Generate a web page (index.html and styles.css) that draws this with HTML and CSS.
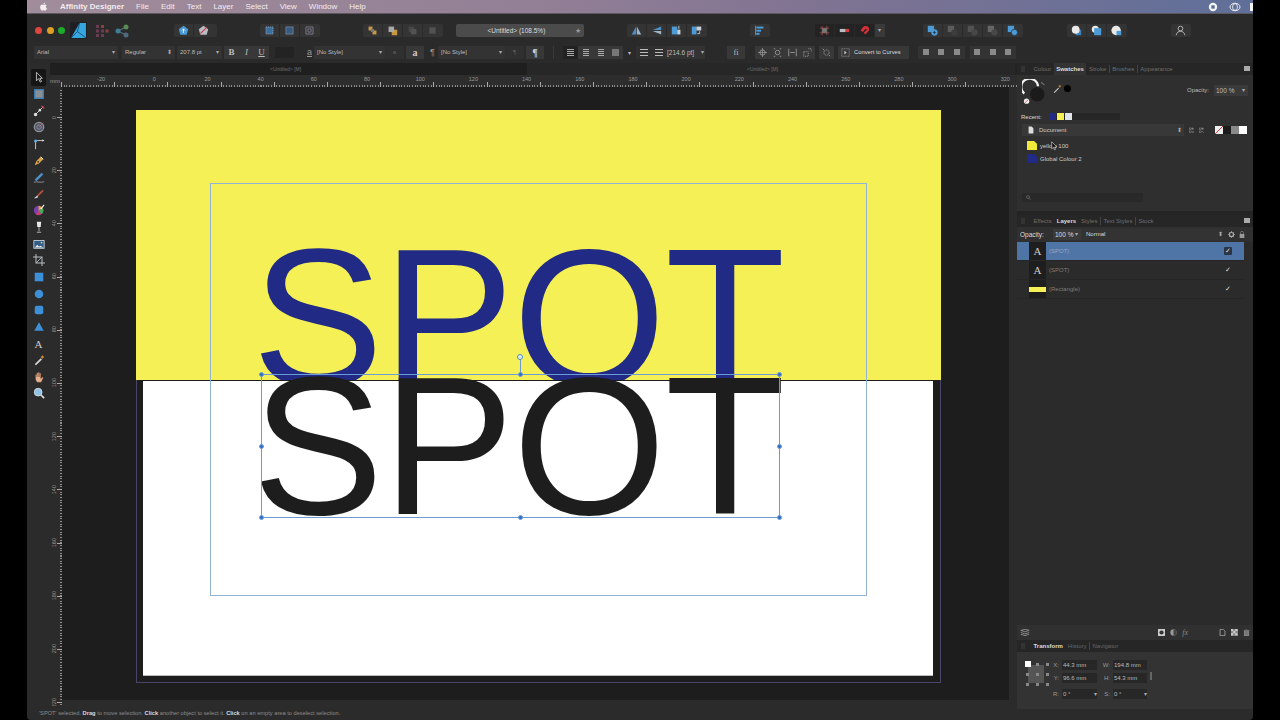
FILE: index.html
```html
<!DOCTYPE html>
<html lang="en">
<head>
    <meta charset="UTF-8">
    <title>Affinity Designer</title>
    <link rel="stylesheet" href="styles.css">
</head>
<body>
<div class="app">
    <!-- mac menu bar -->
    <div class="menubar">
        <svg class="apple" viewBox="0 0 16 16"><path d="M11 1c0 2-1.500 3.200-3 3.200C8 2.500 9.500 1.200 11 1zM8 5c1 0 1.800-.7 3-.7 1 0 2 .5 2.700 1.400-2.400 1.500-2 4.700.5 5.700-.7 1.800-2 3.900-3.400 3.900-1 0-1.500-.6-2.700-.6s-1.700.6-2.700.6C3.800 15.300 2 12 2 9.200 2 6.200 3.800 4.300 5.500 4.300 6.500 4.300 7.200 5 8 5z" fill="#f2eef0"/></svg>
        <span class="menu-app">Affinity Designer</span>
        <span class="menu-item">File</span>
        <span class="menu-item">Edit</span>
        <span class="menu-item">Text</span>
        <span class="menu-item">Layer</span>
        <span class="menu-item">Select</span>
        <span class="menu-item">View</span>
        <span class="menu-item">Window</span>
        <span class="menu-item">Help</span>
        <span class="menu-right">
            <svg class="tray" viewBox="0 0 12 12"><circle cx="6" cy="6" r="5" fill="#f4f4f4"/><rect x="4" y="4" width="4" height="4" fill="#5c6c96"/></svg>
            <svg class="tray tray-cc" viewBox="0 0 14 12"><ellipse cx="7" cy="6" rx="6" ry="4.500" fill="none" stroke="#eee" stroke-width="1.200"/><ellipse cx="7" cy="6" rx="3" ry="4" fill="none" stroke="#eee"/></svg>
            <span class="tray-cut"></span>
        </span>
    </div>

    <!-- main toolbar -->
    <div class="toolbar">
        <span class="light light-red"></span>
        <span class="light light-amber"></span>
        <span class="light light-green"></span>
        <svg class="logo" viewBox="0 0 16 16"><rect width="16" height="16" fill="#1d1f22"/><path d="M1 15 9 1h6v14z" fill="#35a6e0"/><path d="M1 15 7 9l8 6M7 9l2-8" fill="none" stroke="#0f3f66" stroke-width=".7"/></svg>
        <svg class="persona" viewBox="0 0 14 14"><g fill="#6b3b52"><rect x="1" y="1" width="3" height="3"/><rect x="6" y="1" width="3" height="3" fill="#8c3f3f"/><rect x="1" y="5.500" width="3" height="3"/><rect x="6" y="5.500" width="3" height="3"/><rect x="10.500" y="5.500" width="3" height="3" fill="#8c3f3f"/><rect x="1" y="10" width="3" height="3"/><rect x="6" y="10" width="3" height="3"/></g></svg>
        <svg class="persona persona-b" viewBox="0 0 14 14"><path d="M3 7 11 3M3 7l8 4" stroke="#55707a" stroke-width="1.200"/><circle cx="3" cy="7" r="2.500" fill="#3f7f95"/><circle cx="11" cy="3" r="2.500" fill="#5a8a55"/><circle cx="11" cy="11" r="2.500" fill="#4d6a80"/></svg>

        <div class="tb-group tb-share">
            <span class="tb-btn"><svg viewBox="0 0 14 14"><path d="M7 1l6 4.500-2 7H3l-2-7z" fill="#4d9bd6"/><path d="M7 10V5M5 7l2-2 2 2" stroke="#fff" fill="none"/></svg></span>
            <span class="tb-btn"><svg viewBox="0 0 14 14"><path d="M7 1l6 4.500-2 7H3l-2-7z" fill="#b9bec6"/><path d="M3 11 11 3" stroke="#d23b3b" stroke-width="1.400"/></svg></span>
        </div>
        <div class="tb-group tb-snap">
            <span class="tb-btn"><svg viewBox="0 0 14 14"><rect x="2.500" y="2.500" width="9" height="9" fill="#3a6f9c" stroke="#9ab" stroke-dasharray="1.500 1"/></svg></span>
            <span class="tb-btn"><svg viewBox="0 0 14 14"><rect x="2.500" y="2.500" width="9" height="9" fill="#365a80" stroke="#789"/></svg></span>
            <span class="tb-btn"><svg viewBox="0 0 14 14"><path d="M2.500 2.500h9v9h-9z M5 5h4v4H5z" fill="none" stroke="#889"/></svg></span>
        </div>
        <div class="tb-group tb-order">
            <span class="tb-btn"><svg viewBox="0 0 14 14"><rect x="2" y="2" width="5" height="5" fill="#c79a4a"/><rect x="7" y="7" width="5" height="5" fill="#c79a4a"/><rect x="5" y="5" width="4" height="4" fill="#777"/></svg></span>
            <span class="tb-btn"><svg viewBox="0 0 14 14"><rect x="6" y="6" width="7" height="7" fill="#c8983f"/><rect x="2" y="2" width="7" height="7" fill="#aaa"/></svg></span>
            <span class="tb-btn tb-dim"><svg viewBox="0 0 14 14"><rect x="2" y="2" width="7" height="7" fill="#555"/><rect x="5" y="5" width="7" height="7" fill="#666"/></svg></span>
            <span class="tb-btn tb-dim"><svg viewBox="0 0 14 14"><rect x="3" y="3" width="8" height="8" fill="#666"/></svg></span>
        </div>
        <div class="doc-title">&lt;Untitled&gt; (108.5%)<span class="doc-star">★</span></div>
        <div class="tb-group tb-flip">
            <span class="tb-btn"><svg viewBox="0 0 14 14"><path d="M6.500 2v10H1z" fill="#4d8fc7"/><path d="M7.500 2v10H13z" fill="#9fb4c7"/></svg></span>
            <span class="tb-btn"><svg viewBox="0 0 14 14"><path d="M13 2v4.500H2z" fill="#4d8fc7"/><path d="M13 12V7.500H2z" fill="#9fb4c7"/></svg></span>
            <span class="tb-btn"><svg viewBox="0 0 14 14"><rect x="1" y="2" width="7" height="10" fill="#4d9bd6"/><rect x="8" y="6" width="4" height="6" fill="#c6d0d8"/><path d="M10 1v4" stroke="#ddd"/></svg></span>
            <span class="tb-btn"><svg viewBox="0 0 14 14"><rect x="1" y="2" width="6" height="10" fill="#4d9bd6"/><rect x="7" y="2" width="6" height="5" fill="#c6d0d8"/><path d="M11 8v3H8" stroke="#ddd" fill="none"/></svg></span>
        </div>
        <div class="tb-group tb-align">
            <span class="tb-btn"><svg viewBox="0 0 14 14"><path d="M2 1v12" stroke="#7aa"/><rect x="3" y="2" width="9" height="2.500" fill="#4d9bd6"/><rect x="3" y="6" width="6" height="2.500" fill="#4d9bd6"/><rect x="3" y="10" width="4" height="2.500" fill="#4d9bd6"/></svg></span>
        </div>
        <div class="tb-group tb-guides">
            <span class="tb-btn"><svg viewBox="0 0 14 14"><path d="M4 1v12M10 1v12M1 4h12M1 10h12" stroke="#b05050"/><rect x="4" y="4" width="6" height="6" fill="#777"/></svg></span>
            <span class="tb-btn"><svg viewBox="0 0 14 14"><rect x="1" y="5" width="8" height="4" fill="#b9bec6"/><rect x="8" y="5" width="5" height="4" fill="#d23b3b"/></svg></span>
            <span class="tb-btn"><svg viewBox="0 0 14 14"><path d="M12 3a4.500 4.500 0 0 0-7 0L2 7l3 2 3-4a1.500 1.500 0 0 1 2 1l-4 4 2 2 4-4c1.200-1.500 1-3.500 0-5z" fill="#d8303a"/></svg></span>
            <span class="tb-arrow">▾</span>
        </div>
        <div class="tb-group tb-bool">
            <span class="tb-btn"><svg viewBox="0 0 14 14"><rect x="1" y="1" width="8" height="8" fill="#4d9bd6"/><circle cx="9.500" cy="9.500" r="4" fill="#4d9bd6"/><path d="M7.500 9.500h4M9.500 7.500v4" stroke="#234"/></svg></span>
            <span class="tb-btn tb-dim"><svg viewBox="0 0 14 14"><rect x="1" y="1" width="8" height="8" fill="#777"/><circle cx="9.500" cy="9.500" r="4" fill="#444"/></svg></span>
            <span class="tb-btn tb-dim"><svg viewBox="0 0 14 14"><rect x="1" y="1" width="8" height="8" fill="#666"/><circle cx="9.500" cy="9.500" r="4" fill="#555"/></svg></span>
            <span class="tb-btn tb-dim"><svg viewBox="0 0 14 14"><rect x="1" y="1" width="8" height="8" fill="#888"/><circle cx="9.500" cy="9.500" r="4" fill="#555"/></svg></span>
            <span class="tb-btn"><svg viewBox="0 0 14 14"><rect x="1" y="1" width="8" height="8" fill="#4d9bd6"/><circle cx="9.500" cy="9.500" r="4" fill="#4d9bd6" stroke="#234"/></svg></span>
        </div>
        <div class="tb-group tb-insert">
            <span class="tb-btn"><svg viewBox="0 0 14 14"><rect x="6" y="6" width="7" height="7" fill="#3d7fb8"/><circle cx="6" cy="6" r="5" fill="#e9e9e9"/></svg></span>
            <span class="tb-btn"><svg viewBox="0 0 14 14"><circle cx="5.500" cy="5.500" r="4.500" fill="#e9e9e9"/><rect x="4" y="4" width="9" height="9" fill="#4d9bd6"/></svg></span>
            <span class="tb-btn"><svg viewBox="0 0 14 14"><circle cx="6.500" cy="7" r="6" fill="#e9e9e9"/><rect x="7" y="7.500" width="6" height="5.500" fill="#4d9bd6"/></svg></span>
        </div>
        <div class="tb-group tb-user">
            <span class="tb-btn"><svg viewBox="0 0 14 14"><circle cx="7" cy="4.500" r="3" fill="none" stroke="#ccc"/><path d="M1.500 13c.5-3.500 3-5 5.500-5s5 1.500 5.500 5" fill="none" stroke="#ccc"/></svg></span>
        </div>
    </div>

    <!-- context toolbar -->
    <div class="contextbar">
        <span class="field f-font">Arial<i class="caret">▾</i></span>
        <span class="field f-style">Regular<i class="stepper">⬍</i></span>
        <span class="field f-size">207.8 pt<i class="caret">▾</i></span>
        <span class="cx-btn cx-b">B</span>
        <span class="cx-btn cx-i">I</span>
        <span class="cx-btn cx-u">U</span>
        <span class="cx-swatch"></span>
        <span class="cx-glyph cx-a">a</span>
        <span class="field f-nostyle">[No Style]<i class="caret">▾</i></span>
        <span class="cx-btn cx-small cx-dim">a</span>
        <span class="cx-btn cx-big">a</span>
        <span class="cx-glyph cx-para">¶</span>
        <span class="field f-nostyle2">[No Style]<i class="caret">▾</i></span>
        <span class="cx-btn cx-small cx-dim">¶</span>
        <span class="cx-btn cx-big">¶</span>
        <span class="cx-sep"></span>
        <span class="cx-btn cx-line cx-on"><b></b></span>
        <span class="cx-btn cx-line cx-center"><b></b></span>
        <span class="cx-btn cx-line cx-right"><b></b></span>
        <span class="cx-btn cx-line"><b class="cx-fill"></b></span>
        <span class="cx-arrow">▾</span>
        <span class="cx-btn cx-list"><b></b></span>
        <span class="cx-btn cx-list"><b></b></span>
        <span class="field f-width">[214.6 pt]<i class="caret">▾</i></span>
        <span class="cx-btn cx-fi">fi</span>
        <span class="cx-btn cx-ic"><svg viewBox="0 0 12 12"><circle cx="6" cy="6" r="3.500" fill="none" stroke="#aaa"/><path d="M6 0v12M0 6h12" stroke="#aaa" stroke-width=".8"/></svg></span>
        <span class="cx-btn cx-ic"><svg viewBox="0 0 12 12"><circle cx="6" cy="6" r="3" fill="none" stroke="#aaa"/><path d="M1 1h2M9 1h2M1 11h2M9 11h2" stroke="#aaa"/></svg></span>
        <span class="cx-btn cx-ic"><svg viewBox="0 0 12 12"><path d="M1 1v10M11 1v10M3 6h6" stroke="#aaa"/></svg></span>
        <span class="cx-btn cx-ic"><svg viewBox="0 0 12 12"><path d="M1 5h6v6H1zM7 1h4v4" fill="none" stroke="#aaa" stroke-dasharray="1.500 1"/></svg></span>
        <span class="cx-btn cx-ic cx-ic2"><svg viewBox="0 0 12 12"><circle cx="6" cy="6" r="3.500" fill="none" stroke="#aaa" stroke-dasharray="2 1"/><path d="M1 1l2 2M11 11 9 9" stroke="#aaa"/></svg></span>
        <span class="cx-btn cx-ic cx-ic3"><svg viewBox="0 0 12 12"><path d="M1 1h10v10H1z" fill="none" stroke="#999" stroke-dasharray="1.500 1"/><path d="M4.500 3.500v5l3-2.500z" fill="#ccc"/></svg></span>
        <span class="cx-curves">Convert to Curves</span>
        <div class="cx-aligns cx-aligns-a">
            <span class="al al-l"></span><span class="al al-c"></span><span class="al al-r"></span>
        </div>
        <div class="cx-aligns cx-aligns-b">
            <span class="al al-t"></span><span class="al al-m"></span><span class="al al-b"></span>
        </div>
    </div>

    <div class="work">
        <!-- tools -->
        <div class="tools">
            <span class="tool tool-on"><svg viewBox="0 0 14 14"><path d="M4 1.500v10l2.500-2.500 2 4 1.500-.8-2-3.700H11z" fill="#1c1c1c" stroke="#ddd" stroke-width=".9"/></svg></span>
            <span class="tool"><svg viewBox="0 0 14 14"><rect x="2" y="2" width="10" height="10" fill="#8a8f94" stroke="#3d7fb8" stroke-width="1.500"/></svg></span>
            <span class="tool"><svg viewBox="0 0 14 14"><path d="M2 12 12 2" stroke="#ddd"/><circle cx="3" cy="11" r="2" fill="#ddd"/><circle cx="8" cy="6" r="1.500" fill="#ddd"/><path d="M10 1l3 3" stroke="#c9454f" stroke-width="1.500"/></svg></span>
            <span class="tool"><svg viewBox="0 0 14 14"><circle cx="7" cy="7" r="5.500" fill="#556" stroke="#8a949c" stroke-width="1.500"/><circle cx="7" cy="7" r="2.500" fill="none" stroke="#8a949c"/><path d="M7 7l5-5" stroke="#b66"/></svg></span>
            <span class="tool"><svg viewBox="0 0 14 14"><path d="M3 13V5c0-1 1-2 2-2h8" fill="none" stroke="#ddd"/><rect x="1.500" y="2" width="3" height="3" fill="#6ab0e0"/><path d="M13 3l-2-1.500v3z" fill="#ddd"/></svg></span>
            <span class="tool"><svg viewBox="0 0 14 14"><path d="M2 12l2-5 5-5 3 3-5 5z" fill="#d8a24a"/><circle cx="6" cy="8" r="1" fill="#333"/><path d="M9 2l3 3" stroke="#eee"/></svg></span>
            <span class="tool"><svg viewBox="0 0 14 14"><path d="M2 10 10 2l2 2-8 8z" fill="#4d8fc7"/><path d="M1 13c4-1 8 1 12-.5" stroke="#99a" fill="none"/></svg></span>
            <span class="tool"><svg viewBox="0 0 14 14"><path d="M4 9 11 2l1.500 1.500L6 10z" fill="#b5533f"/><path d="M1 12c2-1 3-3 4-3l1 1.500c-1 1.500-3 1.500-5 1.500z" fill="#ddd"/></svg></span>
            <span class="tool"><svg viewBox="0 0 14 14"><circle cx="6.500" cy="7.500" r="5.500" fill="#7a3fb0"/><path d="M6.500 7.500V2a5.500 5.500 0 0 1 5 3z" fill="#e0a030"/><path d="M6.500 7.500l5-2.500a5.500 5.500 0 0 1-2 7z" fill="#3fae5a"/><path d="M6.500 7.500l3 4.500a5.500 5.500 0 0 1-6 0z" fill="#d43a6a"/><path d="M9 6l4-5" stroke="#eee" stroke-width="1.300"/></svg></span>
            <span class="tool"><svg viewBox="0 0 14 14"><path d="M4.500 1h5l-.5 6H5z" fill="#e8e8e8"/><path d="M7 7v5M4.500 13h5" stroke="#aaa" stroke-width="1.200"/></svg></span>
            <span class="tool"><svg viewBox="0 0 14 14"><rect x="1" y="3" width="12" height="9" fill="#2f5d88" stroke="#cfd6dc"/><path d="M2 11l3-3 2 2 2-1 3 2z" fill="#e8e8e8"/><circle cx="10" cy="5.500" r="1" fill="#e8c85a"/></svg></span>
            <span class="tool"><svg viewBox="0 0 14 14"><path d="M3.500 0v10.500H14M0 3.500h10.500V14" fill="none" stroke="#b8bcc0" stroke-width="1.200"/><path d="M3.500 10.500l7-7" stroke="#b8bcc0"/></svg></span>
            <span class="tool"><svg viewBox="0 0 14 14"><rect x="2" y="2" width="10" height="10" fill="#3d8fd8"/></svg></span>
            <span class="tool"><svg viewBox="0 0 14 14"><circle cx="7" cy="7" r="5" fill="#3d8fd8"/></svg></span>
            <span class="tool"><svg viewBox="0 0 14 14"><rect x="2" y="2" width="10" height="10" rx="2.500" fill="#3d8fd8"/></svg></span>
            <span class="tool"><svg viewBox="0 0 14 14"><path d="M7 1.500l5.500 10h-11z" fill="#3d8fd8"/></svg></span>
            <span class="tool tool-text">A</span>
            <span class="tool"><svg viewBox="0 0 14 14"><path d="M2 12 9 5l1.500 1.500L3.500 13z" fill="#d8d8d8"/><path d="M9 3.500l2-2 2 2-2 2z" fill="#c98a3a"/></svg></span>
            <span class="tool"><svg viewBox="0 0 14 14"><path d="M3 8V4.500a.8.8 0 0 1 1.500 0V7V2.500a.8.8 0 0 1 1.500 0V7V2a.8.8 0 0 1 1.500 0v5V3a.8.8 0 0 1 1.500 0v6l1.500-1.500c1-.6 1.800.2 1.200 1L9.500 13H5c-1.500-1-2-3-2-5z" fill="#e5b28e" stroke="#7a4a30" stroke-width=".4"/></svg></span>
            <span class="tool"><svg viewBox="0 0 14 14"><circle cx="6" cy="6" r="4.500" fill="#8fc4e8" stroke="#ddd"/><path d="M9.500 9.500 13 13" stroke="#ddd" stroke-width="1.800"/></svg></span>
        </div>

        <!-- document -->
        <div class="doc">
            <div class="doc-tabs">
                <span class="doc-tab">&lt;Untitled&gt; [M]</span>
                <span class="doc-tab doc-tab-b">&lt;Untitled&gt; [M]</span>
            </div>
            <div class="hruler">
                <span class="ruler-unit">mm</span>
                <div class="hticks">
                    <span>-20</span><span>0</span><span>20</span><span>40</span><span>60</span><span>80</span><span>100</span><span>120</span><span>140</span><span>160</span><span>180</span><span>200</span><span>220</span><span>240</span><span>260</span><span>280</span><span>300</span><span>320</span>
                </div>
            </div>
            <div class="doc-body">
                <div class="vruler">
                    <span>0</span><span>20</span><span>40</span><span>60</span><span>80</span><span>100</span><span>120</span><span>140</span><span>160</span><span>180</span><span>200</span><span>220</span>
                </div>
                <div class="canvas">
                    <div class="page">
                        <div class="sheet"></div>
                        <div class="banner">
                            <div class="spot spot-blue">SPOT</div>
                        </div>
                    </div>
                    <div class="spot spot-black">SPOT</div>
                    <div class="text-frame"></div>
                    <div class="selection">
                        <i class="rot-line"></i>
                        <i class="handle handle-rot"></i>
                        <i class="handle h-tl"></i><i class="handle h-tm"></i><i class="handle h-tr"></i>
                        <i class="handle h-ml"></i><i class="handle h-mr"></i>
                        <i class="handle h-bl"></i><i class="handle h-bm"></i><i class="handle h-br"></i>
                    </div>
                </div>
            </div>
        </div>

        <!-- studio panels -->
        <div class="studio">
            <div class="panel-tabs">
                <span class="tab-grip"></span>
                <span class="tab">Colour</span>
                <span class="tab tab-on">Swatches</span>
                <span class="tab">Stroke</span>
                <span class="tab tab-bar">Brushes</span>
                <span class="tab tab-bar">Appearance</span>
                <span class="tab-menu"></span>
            </div>
            <div class="swatches">
                <div class="colour-row">
                    <svg class="colour-well" viewBox="0 0 34 34"><path d="M3 19a11 11 0 1 1 18-9" fill="none" stroke="#f2f2f2" stroke-width="3"/><circle cx="20" cy="20" r="10" fill="#1b1b1b" stroke="#333"/><circle cx="6" cy="29" r="3.500" fill="#eee"/><path d="M4 31l4-4" stroke="#d23b3b"/><path d="M25 5c2 0 3 1 4 3" fill="none" stroke="#aaa"/></svg>
                    <svg class="dropper" viewBox="0 0 12 12"><path d="M1 11 7 5l1 1-6 6z" fill="#c9c9c9"/><path d="M7 3l2-2 2 2-2 2z" fill="#b07a30"/></svg>
                    <span class="black-dot"></span>
                    <span class="opacity-label">Opacity:</span>
                    <span class="panel-select">100 %<i class="caret">▾</i></span>
                </div>
                <div class="recent-row">
                    <span class="recent-label">Recent:</span>
                    <div class="recent-strip">
                        <i class="chip chip-blue"></i><i class="chip chip-yellow"></i><i class="chip chip-white"></i>
                    </div>
                </div>
                <div class="doc-row">
                    <div class="doc-select">
                        <svg class="doc-icon" viewBox="0 0 10 12"><path d="M1 0h5l3 3v9H1z" fill="#ddd"/></svg>
                        Document<i class="stepper">⬍</i>
                    </div>
                    <svg class="grid-icon" viewBox="0 0 20 12"><g fill="none" stroke="#999" stroke-width=".9"><rect x="1" y="1" width="3.500" height="3.500"/><rect x="6" y="1" width="3.500" height="3.500"/><rect x="1" y="7" width="3.500" height="3.500"/><path d="M8 7v4M6 9h4"/></g></svg>
                    <svg class="grid-icon" viewBox="0 0 20 12"><g fill="none" stroke="#999" stroke-width=".9"><rect x="1" y="1" width="3.500" height="3.500"/><rect x="6" y="1" width="3.500" height="3.500"/><rect x="1" y="7" width="3.500" height="3.500"/><path d="M6 7l4 4"/></g></svg>
                    <span class="mini-swatch mini-none"></span>
                    <span class="mini-swatch mini-black"></span>
                    <span class="mini-swatch mini-grey"></span>
                    <span class="mini-swatch mini-white"></span>
                </div>
                <div class="swatch-row">
                    <i class="swatch swatch-yellow"></i><span>yellow 100</span>
                    <svg class="cursor" viewBox="0 0 10 14"><path d="M1 1v10l2.500-2 1.500 3.500 1.500-.7L5 8.500h3.500z" fill="#111" stroke="#eee" stroke-width=".8"/></svg>
                </div>
                <div class="swatch-row">
                    <i class="swatch swatch-blue"></i><span>Global Colour 2</span>
                </div>
                <div class="search-box">
                    <svg viewBox="0 0 10 10"><circle cx="4" cy="4" r="3" fill="none" stroke="#888"/><path d="M6.500 6.500 9.500 9.500" stroke="#888"/></svg>
                </div>
            </div>

            <div class="panel-tabs panel-tabs-layers">
                <span class="tab-grip"></span>
                <span class="tab">Effects</span>
                <span class="tab tab-on tab-plain">Layers</span>
                <span class="tab">Styles</span>
                <span class="tab tab-bar">Text Styles</span>
                <span class="tab tab-bar">Stock</span>
                <span class="tab-menu"></span>
            </div>
            <div class="layers">
                <div class="layers-head">
                    <span class="layers-label">Opacity:</span>
                    <span class="panel-select layers-opacity">100 %<i class="caret">▾</i></span>
                    <span class="layers-blend">Normal<i class="stepper">⬍</i></span>
                    <svg class="head-icon" viewBox="0 0 12 12"><circle cx="6" cy="6" r="3.500" fill="none" stroke="#aaa" stroke-width="2"/><path d="M6 0v2M6 10v2M0 6h2M10 6h2M2 2l1.500 1.500M10 2 8.500 3.500M2 10l1.500-1.500M10 10 8.500 8.500" stroke="#aaa" stroke-width="1.200"/></svg>
                    <svg class="head-icon head-lock" viewBox="0 0 10 12"><rect x="1" y="5" width="8" height="7" fill="#999"/><path d="M2.500 5V3a2.500 2.500 0 0 1 5 0v2" fill="none" stroke="#999"/></svg>
                </div>
                <div class="layer-list">
                    <div class="layer layer-on">
                        <span class="thumb thumb-a">A</span><span class="layer-name">(SPOT)</span><span class="check check-on">✓</span>
                    </div>
                    <div class="layer">
                        <span class="thumb thumb-a">A</span><span class="layer-name">(SPOT)</span><span class="check">✓</span>
                    </div>
                    <div class="layer">
                        <span class="thumb"><i class="thumb-rect"></i></span><span class="layer-name">(Rectangle)</span><span class="check">✓</span>
                    </div>
                </div>
                <div class="layers-foot">
                    <svg class="foot-stack" viewBox="0 0 14 10"><path d="M1 2l6-1.500L13 2 7 4zM1 5l6 2 6-2M1 7.500l6 2 6-2" fill="none" stroke="#aaa"/></svg>
                    <span class="foot-right">
                        <svg viewBox="0 0 10 10"><rect x="0" y="0" width="10" height="10" fill="#ccc"/><circle cx="5" cy="5" r="3" fill="#333"/></svg>
                        <svg viewBox="0 0 10 10"><circle cx="5" cy="5" r="4.500" fill="#999"/><path d="M5 .5a4.500 4.500 0 0 1 0 9z" fill="#444"/></svg>
                        <em class="foot-fx">fx</em>
                        <svg class="foot-gap" viewBox="0 0 10 10"><path d="M1.500.5h4.500l2.500 2.500v6.500h-7z" fill="none" stroke="#bbb"/></svg>
                        <svg viewBox="0 0 10 10"><rect width="10" height="10" fill="#888"/><path d="M0 0h3v3H0zM6 0h3v3H6zM3 3h3v3H3zM0 6h3v3H0zM6 6h3v3H6z" fill="#ccc"/></svg>
                        <svg viewBox="0 0 10 10"><path d="M1 2h8M2 3v7h6V3M4 0h2" stroke="#999" fill="#777"/></svg>
                    </span>
                </div>
            </div>

            <div class="panel-tabs panel-tabs-transform">
                <span class="tab-grip"></span>
                <span class="tab tab-on tab-plain">Transform</span>
                <span class="tab">History</span>
                <span class="tab tab-bar">Navigator</span>
            </div>
            <div class="transform">
                <div class="anchor">
                    <i class="anchor-box"></i>
                    <div class="anchor-dots">
                        <i class="dot-on"></i><i></i><i></i><i></i><i></i><i></i><i></i><i></i><i></i>
                    </div>
                </div>
                <div class="tf-grid">
                    <label>X:</label><span class="tf-input">44.3 mm</span>
                    <label>W:</label><span class="tf-input">194.8 mm</span>
                    <label>Y:</label><span class="tf-input">96.6 mm</span>
                    <label>H:</label><span class="tf-input">54.3 mm</span>
                    <label class="tf-low">R:</label><span class="tf-input tf-low">0 °<i class="caret">▾</i></span>
                    <label class="tf-low">S:</label><span class="tf-input tf-low">0 °<i class="caret">▾</i></span>
                </div>
                <span class="tf-link"></span>
            </div>
        </div>
    </div>

    <div class="statusbar">'SPOT' selected. <b>Drag</b> to move selection. <b>Click</b> another object to select it. <b>Click</b> on an empty area to deselect selection.</div>
</div>
</body>
</html>
```

FILE: styles.css
```css
* {
    box-sizing: border-box;
}
html, body {
    margin: 0;
    height: 100%;
    background-color: #000;
    overflow: hidden;
}
body {
    font-family: "Liberation Sans", Arial, sans-serif;
    font-size: 7px;
    color: #aaa;
}
i, em {
    font-style: normal;
}
svg {
    display: block;
}

.app {
    width: 1226px;
    height: 720px;
    margin-left: 27px;
    display: flex;
    flex-direction: column;
    background-color: #2b2b2b;
    border-radius: 0 0 4px 4px;
    overflow: hidden;
}

/* menu bar */
.menubar {
    height: 14px;
    flex: none;
    display: flex;
    align-items: center;
    background: linear-gradient(90deg, #a08c9a 0%, #948096 40%, #7f7392 65%, #5f6f99 100%);
    color: #f1ecf0;
    font-size: 8px;
    border-bottom: 1px solid #5d5860;
}
.apple {
    width: 9px;
    height: 9px;
    margin-left: 12px;
}
.menu-app {
    font-weight: bold;
    margin-left: 12px;
    margin-right: 12px;
}
.menu-item {
    margin-right: 12px;
}
.menu-right {
    margin-left: auto;
    display: flex;
    align-items: center;
}
.tray {
    width: 10px;
    height: 10px;
}
.tray-cc {
    width: 12px;
    margin-left: 11px;
}
.tray-cut {
    width: 3px;
    height: 8px;
    margin-left: 9px;
    background-color: #f4f4f4;
}

/* main toolbar */
.toolbar {
    height: 30px;
    flex: none;
    display: flex;
    align-items: center;
    padding-top: 3px;
    background-color: #2a2a2a;
}
.light {
    width: 7px;
    height: 7px;
    border-radius: 50%;
    margin-right: 4.500px;
}
.light-red {
    margin-left: 8px;
    background-color: #e0443e;
}
.light-amber {
    background-color: #dea123;
}
.light-green {
    background-color: #1aab29;
}
.logo {
    width: 17px;
    height: 17px;
    margin-left: 0;
}
.persona {
    width: 14px;
    height: 14px;
    margin-left: 8px;
}
.persona-b {
    margin-left: 6px;
}
.tb-group {
    display: flex;
    height: 13px;
    background-color: #343434;
    border-radius: 2px;
}
.tb-btn {
    width: 20px;
    height: 13px;
    display: flex;
    align-items: center;
    justify-content: center;
    border-right: 1px solid #2a2a2a;
}
.tb-btn:last-child {
    border-right: none;
}
.tb-btn svg {
    width: 11px;
    height: 11px;
}
.tb-dim svg {
    opacity: .6;
}
.tb-share {
    margin-left: 45px;
    width: 43px;
}
.tb-snap {
    margin-left: 43px;
}
.tb-order {
    margin-left: 43px;
}
.doc-title {
    width: 128px;
    height: 13px;
    margin-left: 13px;
    padding-left: 32px;
    position: relative;
    line-height: 13px;
    background-color: #4b4b4b;
    border-radius: 2px;
    color: #ddd;
    font-size: 6.500px;
}
.doc-star {
    position: absolute;
    right: 3px;
    top: 0;
    color: #999;
    font-size: 7px;
}
.tb-flip {
    margin-left: 43px;
}
.tb-align {
    margin-left: 43px;
}
.tb-guides {
    margin-left: 45px;
    background-color: #232323;
}
.tb-arrow {
    width: 10px;
    line-height: 13px;
    text-align: center;
    color: #aaa;
    background-color: #3a3a3a;
    font-size: 6px;
}
.tb-bool {
    margin-left: 38px;
}
.tb-insert {
    margin-left: 44px;
}
.tb-user {
    margin-left: 44px;
}

/* context toolbar */
.contextbar {
    height: 19px;
    flex: none;
    display: flex;
    align-items: center;
    padding: 0 0 3px 7px;
    background-color: #2a2a2a;
    font-size: 6px;
    color: #bbb;
}
.field {
    height: 13px;
    line-height: 13px;
    display: flex;
    justify-content: space-between;
    padding: 0 3px;
    background-color: #333;
    border-radius: 1px;
}
.caret, .stepper {
    font-size: 6px;
    color: #aaa;
}
.f-font {
    width: 84px;
    margin-right: 4px;
}
.f-style {
    width: 53px;
    margin-right: 2px;
}
.f-size {
    width: 45px;
    margin-right: 2px;
}
.f-nostyle {
    width: 71px;
}
.f-nostyle2 {
    width: 67px;
    margin-left: 1px;
}
.f-width {
    width: 39px;
    margin-left: 0;
    padding: 0 1px;
    font-size: 6.500px;
    white-space: nowrap;
}
.cx-btn {
    width: 15px;
    height: 13px;
    display: flex;
    align-items: center;
    justify-content: center;
    background-color: #383838;
    color: #bbb;
}
.cx-b {
    font-family: "Liberation Serif", serif;
    font-weight: bold;
    font-size: 9px;
}
.cx-i {
    font-family: "Liberation Serif", serif;
    font-style: italic;
    font-size: 9px;
}
.cx-u {
    font-family: "Liberation Serif", serif;
    text-decoration: underline;
    font-size: 9px;
}
.cx-swatch {
    width: 19px;
    height: 11px;
    margin: 0 11px 0 6px;
    background-color: #232323;
}
.cx-glyph {
    width: 9px;
    font-size: 9px;
    text-align: center;
    color: #999;
}
.cx-a {
    text-decoration: underline;
}
.cx-para {
    margin-left: 4px;
}
.cx-small {
    width: 19px;
    background-color: #303030;
}
.cx-big {
    width: 18px;
    margin-left: 2px;
    font-family: "Liberation Serif", serif;
    font-size: 10px;
    font-weight: bold;
    color: #ccc;
}
.cx-dim {
    color: #666;
}
.cx-sep {
    width: 1px;
    height: 13px;
    margin: 0 9px 0 9px;
    background-color: #3a3a3a;
}
.cx-line b {
    width: 7px;
    height: 7px;
    display: block;
    background: repeating-linear-gradient(180deg, #a9a9a9 0, #a9a9a9 1px, transparent 1px, transparent 2px);
}
.cx-on {
    background-color: #222;
}
.cx-center b {
    width: 6px;
}
.cx-right b {
    width: 6px;
}
.cx-line b.cx-fill {
    background: #777;
}
.cx-arrow {
    width: 13px;
    text-align: center;
    font-size: 6px;
}
.cx-list {
    width: 15px;
    background-color: #303030;
}
.cx-list b {
    width: 8px;
    height: 7px;
    display: block;
    background: repeating-linear-gradient(180deg, #bbb 0, #bbb 1px, transparent 1px, transparent 3px);
}
.cx-fi {
    width: 18px;
    margin-left: 22px;
    font-size: 8px;
    font-family: "Liberation Serif", serif;
}
.cx-ic {
    margin-left: 0;
}
.cx-ic svg {
    width: 9px;
    height: 9px;
}
.cx-fi + .cx-ic {
    margin-left: 10px;
}
.cx-ic2 {
    margin-left: 4px;
}
.cx-ic3 {
    margin-left: 4px;
}
.cx-curves {
    width: 56px;
    height: 13px;
    line-height: 13px;
    padding-left: 1px;
    background-color: #383838;
    color: #ddd;
    font-size: 5.800px;
    white-space: nowrap;
}
.cx-aligns {
    display: flex;
    background-color: #333;
    height: 13px;
}
.cx-aligns-a {
    margin-left: 9px;
}
.cx-aligns-b {
    margin-left: 5px;
}
.al {
    width: 15.500px;
    height: 13px;
    position: relative;
    background: linear-gradient(#8a8a8a, #8a8a8a) center / 6px 6px no-repeat;
}

/* work area */
.work {
    flex: 1;
    min-height: 0;
    display: flex;
}
.tools {
    width: 23px;
    flex: none;
    padding-top: 6px;
    display: flex;
    flex-direction: column;
    align-items: center;
}
.tool {
    width: 15px;
    height: 16.650px;
    display: flex;
    align-items: center;
    justify-content: center;
}
.tool svg {
    width: 12px;
    height: 12px;
}
.tool-on {
    background-color: #151515;
    border-radius: 2px;
}
.tool-text {
    font-family: "Liberation Serif", serif;
    font-size: 11px;
    color: #ccc;
}

/* document */
.doc {
    width: 967px;
    flex: none;
    display: flex;
    flex-direction: column;
}
.doc-tabs {
    height: 12px;
    flex: none;
    display: flex;
    background-color: #222;
    color: #6f6f6f;
    font-size: 5px;
    line-height: 12px;
}
.doc-tab {
    width: 477px;
    padding-left: 220px;
    background-color: #1f1f1f;
}
.doc-tab-b {
    width: 488px;
    padding-left: 220px;
    background-color: #272727;
}
.hruler {
    height: 12px;
    flex: none;
    display: flex;
    background-color: #2d2d2d;
}
.ruler-unit {
    width: 12px;
    padding-top: 3px;
    font-size: 6px;
    color: #999;
}
.hticks {
    flex: 1;
    display: flex;
    padding-left: 14.500px;
    border-right: 1px solid #9a9a9a;
    margin-right: 1px;
    color: #999;
    font-size: 5.500px;
    background:
        repeating-linear-gradient(90deg, #a8a8a8 0, #a8a8a8 1px, transparent 1px, transparent 53.200px) 0.500px 100% / 100% 5px no-repeat,
        repeating-linear-gradient(90deg, #8a8a8a 0, #8a8a8a 1px, transparent 1px, transparent 2.660px) 0.500px 100% / 100% 2px no-repeat;
}
.hticks span {
    width: 53.200px;
    flex: none;
    text-align: center;
    padding-top: 0;
    line-height: 8px;
}
.doc-body {
    flex: 1;
    min-height: 0;
    display: flex;
}
.vruler {
    width: 12px;
    flex: none;
    height: 100%;
    padding-top: 3.500px;
    color: #999;
    font-size: 5.500px;
    overflow: hidden;
    background:
        repeating-linear-gradient(180deg, #a8a8a8 0, #a8a8a8 1px, transparent 1px, transparent 53.200px) 100% 30px / 5px 100% no-repeat,
        repeating-linear-gradient(180deg, #8a8a8a 0, #8a8a8a 1px, transparent 1px, transparent 2.660px) 100% 3px / 2px 100% no-repeat;
}
.vruler span {
    height: 53.200px;
    display: block;
    writing-mode: vertical-rl;
    transform: rotate(180deg);
    text-align: center;
    line-height: 8px;
    width: 8px;
}
.canvas {
    width: 947px;
    height: 613px;
    flex: none;
    position: relative;
    overflow: hidden;
    background-color: #1d1d1d;
}

/* artwork, placed on the free canvas */
.page {
    position: absolute;
    left: 74px;
    top: 23px;
    width: 805px;
    height: 573px;
    border: 1px solid #4a4468;
}
.sheet {
    position: absolute;
    left: 6px;
    top: 270px;
    width: 790px;
    height: 295px;
    background-color: #fff;
    border-bottom: 1px solid #bbb;
}
.banner {
    position: absolute;
    left: -1px;
    top: -1px;
    width: 805px;
    height: 270px;
    overflow: hidden;
    background-color: #f4f056;
}
.spot {
    position: absolute;
    font-size: 197px;
    line-height: 200px;
    letter-spacing: -1px;
    white-space: nowrap;
}
.spot-blue {
    left: 116px;
    top: 108px;
    color: #212a84;
}
.spot-black {
    left: 190px;
    top: 259px;
    color: #1d1d1d;
}
.text-frame {
    position: absolute;
    left: 148px;
    top: 96px;
    width: 657px;
    height: 413px;
    border: 1px solid #8fb4d6;
}
.selection {
    position: absolute;
    left: 199px;
    top: 287px;
    width: 519px;
    height: 144px;
    border: 1px solid #6d9bd6;
}
.handle {
    position: absolute;
    width: 5px;
    height: 5px;
    border-radius: 50%;
    background-color: #2f6fc4;
    border: 1px solid #6d9bd6;
}
.h-tl { left: -3px; top: -3px; }
.h-tm { left: 256px; top: -3px; }
.h-tr { right: -3px; top: -3px; }
.h-ml { left: -3px; top: 69px; }
.h-mr { right: -3px; top: 69px; }
.h-bl { left: -3px; bottom: -3px; }
.h-bm { left: 256px; bottom: -3px; }
.h-br { right: -3px; bottom: -3px; }
.handle-rot {
    left: 255px;
    top: -21px;
    width: 6px;
    height: 6px;
    background-color: #dfeeee;
    border-color: #4f8fc0;
}
.rot-line {
    position: absolute;
    left: 258px;
    top: -16px;
    width: 1px;
    height: 16px;
    background-color: #6d9bd6;
}

/* studio panels */
.studio {
    width: 236px;
    flex: none;
    display: flex;
    flex-direction: column;
    background-color: #242424;
    font-size: 6px;
    color: #bbb;
}
.panel-tabs {
    height: 12px;
    flex: none;
    display: flex;
    align-items: center;
    position: relative;
    background-color: #262626;
    color: #6e6e6e;
    line-height: 12px;
}
.tab-grip {
    width: 4px;
    height: 6px;
    margin: 0 6px 0 4px;
    background-color: #333;
}
.tab {
    padding: 0 2.500px;
    white-space: nowrap;
}
.tab-on {
    color: #ddd;
    font-weight: bold;
    background-color: #333;
}
.tab-plain {
    background-color: transparent;
}
.tab-bar {
    border-left: 1px solid #444;
    line-height: 8px;
}
.tab-menu {
    position: absolute;
    right: 3px;
    top: 3px;
    width: 6px;
    height: 5px;
    background-color: #aaa;
}
.swatches {
    height: 136px;
    flex: none;
    padding: 0 5px;
    background-color: #2f2f2f;
}
.colour-row {
    height: 30px;
    display: flex;
    align-items: center;
}
.colour-well {
    width: 26px;
    height: 26px;
    margin-top: 4px;
}
.dropper {
    width: 9px;
    height: 9px;
    margin: -4px 0 0 5px;
}
.black-dot {
    width: 7px;
    height: 7px;
    margin: -4px 0 0 2px;
    background-color: #000;
    border-radius: 50%;
}
.opacity-label {
    margin-left: auto;
    margin-right: 5px;
}
.panel-select {
    width: 34px;
    height: 11px;
    line-height: 11px;
    display: flex;
    justify-content: space-between;
    padding: 0 3px 0 2px;
    background-color: #3a3a3a;
    font-size: 6.500px;
}
.recent-row {
    height: 11px;
    margin-top: 6px;
    display: flex;
    align-items: center;
}
.recent-label {
    width: 9px;
    overflow: visible;
    margin-left: -1px;
    margin-right: 19px;
    color: #ddd;
}
.recent-strip {
    display: flex;
    width: 71px;
    height: 7px;
    background-color: #262626;
}
.chip {
    width: 7px;
    height: 7px;
    margin-right: 1px;
}
.chip-blue { background-color: #212a84; }
.chip-yellow { background-color: #f4f056; }
.chip-white { background-color: #dfe3ea; }
.doc-row {
    height: 12px;
    margin-top: 2px;
    display: flex;
    align-items: center;
}
.doc-select {
    width: 162px;
    height: 12px;
    line-height: 12px;
    display: flex;
    padding: 0 2px 0 6px;
    background-color: #383838;
    color: #ccc;
}
.doc-select .stepper {
    margin-left: auto;
}
.doc-icon {
    width: 6px;
    height: 8px;
    margin: 2px 5px 0 0;
}
.grid-icon {
    width: 10px;
    height: 9px;
    margin-left: 0;
}
.doc-select + .grid-icon {
    margin-left: 5px;
}
.mini-swatch {
    width: 8px;
    height: 8px;
}
.mini-none {
    margin-left: 6px;
    background: linear-gradient(135deg, #eee 45%, #d23b3b 45%, #d23b3b 55%, #eee 55%);
}
.mini-black { background-color: #1b1b1b; }
.mini-grey { background-color: #8a8a8a; }
.mini-white { background-color: #fff; }
.swatch-row {
    height: 13px;
    margin-top: 3px;
    display: flex;
    align-items: center;
    position: relative;
    padding-left: 5px;
    color: #ccc;
}
.swatch-row + .swatch-row {
    margin-top: 0;
}
.swatch {
    width: 10px;
    height: 9px;
    margin-right: 3px;
    clip-path: polygon(0 0, 70% 0, 100% 30%, 100% 100%, 0 100%);
}
.swatch-yellow { background-color: #f0e83a; }
.swatch-blue { background-color: #212a84; }
.cursor {
    position: absolute;
    left: 29px;
    top: 2px;
    width: 7px;
    height: 10px;
}
.search-box {
    width: 121px;
    height: 9px;
    margin-top: 28px;
    padding: 2px 0 0 4px;
    background-color: #292929;
}
.search-box svg {
    width: 5px;
    height: 5px;
}
.panel-tabs-layers {
    margin-top: 4px;
}
.layers {
    flex: none;
    display: flex;
    flex-direction: column;
    height: 413px;
    background-color: #2b2b2b;
}
.layers-head {
    height: 15px;
    flex: none;
    display: flex;
    align-items: center;
    padding: 0 3px;
    background-color: #303030;
    color: #ddd;
}
.layers-label {
    width: 30px;
    font-size: 6.500px;
}
.layers-opacity {
    width: 28px;
    margin-left: 3px;
    padding-left: 2px;
}
.layers-blend {
    width: 142px;
    margin-left: 0;
    padding-left: 5px;
    display: flex;
    justify-content: space-between;
    line-height: 11px;
    height: 11px;
    background-color: #333;
}
.head-icon {
    width: 7px;
    height: 7px;
    margin-left: 5px;
}
.head-lock {
    width: 6px;
    margin-left: 4px;
}
.layer-list {
    flex: 1;
    width: 227px;
    background-color: #2b2b2b;
}
.layer {
    height: 19px;
    display: flex;
    align-items: center;
    padding-left: 12px;
    padding-right: 12px;
    color: #7e7e7e;
    border-bottom: 1px solid #262626;
}
.layer-on {
    background-color: #4f74a6;
    color: #94a9c6;
}
.thumb {
    width: 17px;
    height: 18px;
    display: flex;
    align-items: center;
    justify-content: center;
    background-color: #1e1e1e;
    color: #ccc;
    font-family: "Liberation Serif", serif;
    font-size: 11px;
    margin-right: 3px;
}
.thumb-rect {
    width: 17px;
    height: 5px;
    background-color: #f4f056;
}
.layer-name {
    flex: 1;
    font-size: 6px;
}
.check {
    width: 8px;
    height: 8px;
    line-height: 8px;
    text-align: center;
    color: #ddd;
    font-size: 7px;
}
.check-on {
    background-color: #2b3444;
    border-radius: 1px;
}
.layers-foot {
    height: 15px;
    flex: none;
    display: flex;
    align-items: center;
    justify-content: space-between;
    padding: 0 3px 0 3px;
    background-color: #303030;
}
.foot-stack {
    width: 10px;
    height: 7px;
}
.foot-right {
    display: flex;
    align-items: center;
    gap: 5px;
}
.foot-right svg {
    width: 7px;
    height: 7px;
}
.foot-fx {
    font-family: "Liberation Serif", serif;
    font-style: italic;
    font-size: 8px;
    color: #888;
}
.foot-right svg.foot-gap {
    margin-left: 26px;
}
.panel-tabs-transform {
    background-color: #262626;
    color: #666;
}
.transform {
    height: 57px;
    flex: none;
    display: flex;
    padding: 8px 0 0 8px;
    background-color: #333;
    position: relative;
    color: #bbb;
}
.anchor {
    width: 22px;
    height: 24px;
    position: relative;
    margin-top: 2px;
}
.anchor-box {
    position: absolute;
    left: 3px;
    top: 3px;
    width: 16px;
    height: 18px;
    background-color: #555;
}
.anchor-dots {
    position: relative;
    display: grid;
    grid-template-columns: repeat(3, 3px);
    grid-template-rows: repeat(3, 3px);
    gap: 7px;
    padding-top: 1px;
    padding-left: 1px;
}
.anchor-dots i {
    background-color: #888;
}
.anchor-dots i.dot-on {
    width: 6px;
    height: 6px;
    margin: -2px 0 0 -1px;
    background-color: #fff;
}
.tf-grid {
    margin-left: 4px;
    display: grid;
    grid-template-columns: 8px 35px 10px 34px;
    grid-template-rows: 10px 10px 10px;
    column-gap: 3px;
    row-gap: 3px;
    align-items: center;
    font-size: 6px;
}
.tf-grid label {
    color: #999;
    text-align: right;
}
.tf-input {
    height: 10px;
    line-height: 10px;
    padding-left: 1px;
    display: flex;
    justify-content: space-between;
    background-color: #272727;
    color: #bbb;
}
.tf-low {
    margin-top: 5px;
}
.tf-link {
    width: 2px;
    height: 8px;
    margin: 12px 0 0 3px;
    background-color: #666;
}

/* status bar */
.statusbar {
    height: 14px;
    flex: none;
    padding-left: 12px;
    line-height: 14px;
    font-size: 5.700px;
    color: #8c8c8c;
    white-space: nowrap;
}
.statusbar b {
    color: #ddd;
}
```
